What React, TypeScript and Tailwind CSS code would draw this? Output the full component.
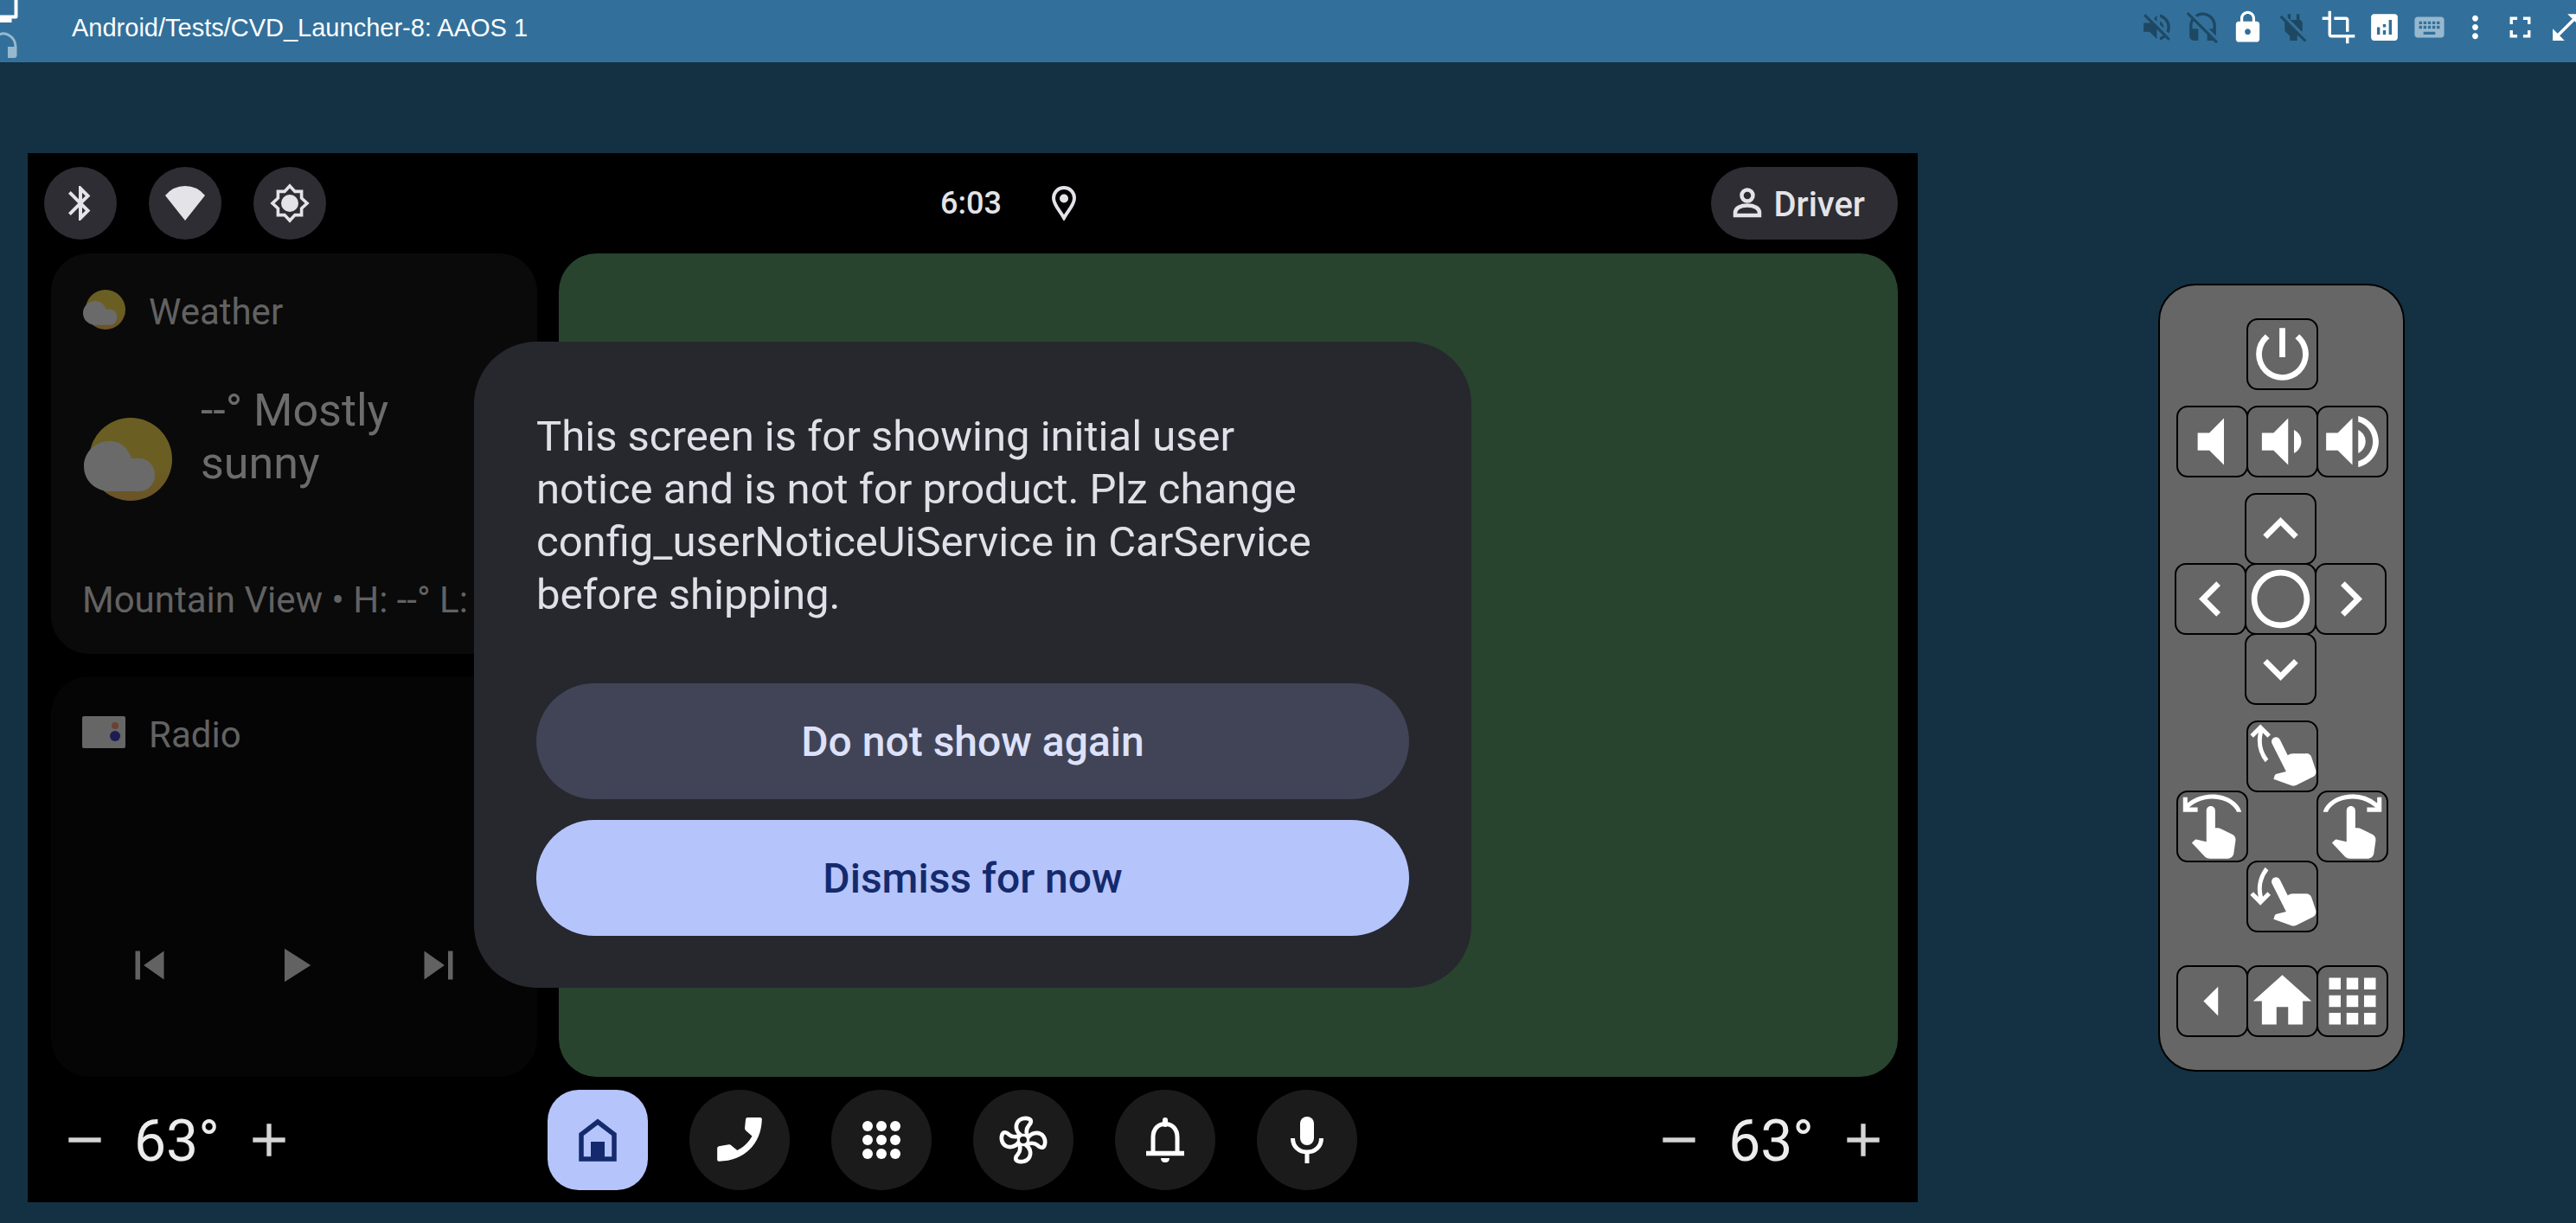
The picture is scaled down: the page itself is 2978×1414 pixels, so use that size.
import type { ReactNode } from "react";
import {
  MdAdd,
  MdAnalytics,
  MdApps,
  MdArrowLeft,
  MdBluetooth,
  MdChevronLeft,
  MdChevronRight,
  MdCrop,
  MdExpandLess,
  MdExpandMore,
  MdFullscreen,
  MdHeadsetOff,
  MdHome,
  MdKeyboard,
  MdLock,
  MdMoreVert,
  MdOpenInFull,
  MdPlayArrow,
  MdPowerOff,
  MdPowerSettingsNew,
  MdRadioButtonUnchecked,
  MdRemove,
  MdSkipNext,
  MdSkipPrevious,
  MdSwipeDown,
  MdSwipeLeft,
  MdSwipeRight,
  MdSwipeUp,
  MdVolumeDown,
  MdVolumeMute,
  MdVolumeOff,
  MdVolumeUp,
} from "react-icons/md";

/* ---------- Header ---------- */

function HeaderEdgeIcons() {
  return (
    <svg viewBox="0 0 24 72" className="h-[72px] w-6 shrink-0" fill="none" aria-hidden="true">
      <path d="M-4 19.5H18.5V-4" stroke="#fff" strokeWidth="4" strokeLinejoin="round" />
      <rect x="-2" y="20" width="15.500" height="6" fill="#fff" />
      <path d="M-2 40.500Q4 37 10 40.500Q18 45 18 54" stroke="#97b8ce" strokeWidth="3" />
      <path d="M9 54H19.500V64Q19.500 67 16.500 67H9Z" fill="#97b8ce" />
    </svg>
  );
}

const headerTools = [
  { label: "Muted", icon: <MdVolumeOff />, tone: "text-[#1e4862]" },
  { label: "Headset off", icon: <MdHeadsetOff />, tone: "text-[#1e4862]" },
  { label: "Lock", icon: <MdLock />, tone: "text-white" },
  { label: "Disconnect", icon: <MdPowerOff />, tone: "text-[#1e4862]" },
  { label: "Crop", icon: <MdCrop />, tone: "text-white" },
  { label: "Statistics", icon: <MdAnalytics />, tone: "text-white" },
  { label: "Keyboard", icon: <MdKeyboard />, tone: "text-[#97b8ce]" },
  { label: "More", icon: <MdMoreVert />, tone: "text-white" },
  { label: "Fullscreen", icon: <MdFullscreen />, tone: "text-white" },
  { label: "Expand", icon: <MdOpenInFull />, tone: "text-white" },
];

function Header() {
  return (
    <header className="flex h-[72px] shrink-0 overflow-hidden bg-[#32709b]">
      <HeaderEdgeIcons />
      <h1 className="ml-[59px] whitespace-nowrap font-['Liberation_Sans',sans-serif] text-[29px] leading-[64px] text-white">
        Android/Tests/CVD_Launcher-8: AAOS 1
      </h1>
      <div className="-mr-[9px] ml-auto flex h-[63px] w-[514px] shrink-0 items-center justify-between text-[41px]">
        {headerTools.map((t) => (
          <button key={t.label} type="button" aria-label={t.label} className={t.tone}>
            {t.icon}
          </button>
        ))}
      </div>
    </header>
  );
}

/* ---------- Car display icons ---------- */

function WifiIcon() {
  return (
    <svg viewBox="0 0 46 40" className="h-10 w-[46px]" fill="currentColor" aria-hidden="true">
      <path d="M0 11Q9 0 23 0T46 11L23 40Z" />
    </svg>
  );
}

function BrightnessIcon() {
  return (
    <svg viewBox="0 0 24 24" className="size-12" aria-hidden="true">
      <path
        d="M12 2l3 3.200h3.800V9L22 12l-3.200 3v3.800H15L12 22l-3-3.200H5.200V15L2 12l3.200-3V5.200H9Z"
        fill="none"
        stroke="currentColor"
        strokeWidth="1.800"
      />
      <circle cx="12" cy="12" r="5" fill="currentColor" />
    </svg>
  );
}

function PinIcon() {
  return (
    <svg viewBox="0 0 28 40" className="h-10 w-7" aria-hidden="true">
      <path
        d="M14 2C7 2 2 7.500 2 14c0 8 7 14 12 23 5-9 12-15 12-23C26 7.500 21 2 14 2Z"
        fill="none"
        stroke="currentColor"
        strokeWidth="4"
      />
      <circle cx="14" cy="14.500" r="5" fill="currentColor" />
    </svg>
  );
}

function PersonIcon() {
  return (
    <svg viewBox="0 0 48 48" className="size-12" fill="none" stroke="currentColor" strokeWidth="4.500" aria-hidden="true">
      <circle cx="24" cy="15" r="6.500" />
      <path d="M10 38V35C10 29.500 16 26.500 24 26.500S38 29.500 38 35V38Z" />
    </svg>
  );
}

function SunCloud({ className }: { className: string }) {
  return (
    <svg viewBox="0 0 104 98" className={className} aria-hidden="true">
      <defs>
        <linearGradient id="sun" x1="0" y1="0" x2="0" y2="1">
          <stop offset="0.600" stopColor="#6b5e22" />
          <stop offset="1" stopColor="#6b5328" />
        </linearGradient>
      </defs>
      <circle cx="56" cy="49" r="48" fill="url(#sun)" />
      <path
        d="M32 28C46 28 54 38 57 48H66C76 48 84 56 84 67S76 86 66 86H28C12 83 2 72 2 57C2 41 15 28 32 28Z"
        fill="#6a6a6a"
      />
    </svg>
  );
}

function RadioIcon() {
  return (
    <svg viewBox="0 0 50 50" className="size-[50px]" aria-hidden="true">
      <rect y="6" width="50" height="37" rx="2" fill="#666" />
      <circle cx="38" cy="17" r="4" fill="#6b4034" />
      <circle cx="38" cy="29" r="6" fill="#1c1c50" />
    </svg>
  );
}

function HouseIcon() {
  return (
    <svg viewBox="0 0 44 50" className="h-[50px] w-11" aria-hidden="true">
      <path d="M3 47V18.500L22 4L41 18.500V47Z" fill="none" stroke="currentColor" strokeWidth="5.500" />
      <path d="M14 27H30V49H14Z" fill="currentColor" />
    </svg>
  );
}

function PhoneIcon() {
  return (
    <svg viewBox="0 0 154 152" className="h-[51px] w-[52px]" fill="currentColor" aria-hidden="true">
      <path d="M104 0H148Q154 0 154 6C152 92 92 150 6 151Q0 151 0 145V106Q0 100 6 99L40 93Q45 92 48 96L69 113C90 103 108 86 120 64L98 45Q94 41 95 36L98 6Q99 0 104 0Z" />
    </svg>
  );
}

function DotsIcon() {
  return (
    <svg viewBox="0 0 44 44" className="size-11" fill="currentColor" aria-hidden="true">
      {[6, 22, 38].map((y) => [6, 22, 38].map((x) => <circle key={`${x}-${y}`} cx={x} cy={y} r="6" />))}
    </svg>
  );
}

function FanIcon() {
  return (
    <svg viewBox="-84 -84 168 168" className="size-14" fill="none" stroke="currentColor" strokeLinecap="round" aria-hidden="true">
      {[0, 90, 180, 270].map((a) => (
        <path
          key={a}
          transform={`rotate(${a})`}
          d="M-10 -18C-24 -28 -28 -46 -21 -60C-13 -76 8 -78 20 -73C30 -68 27 -58 19 -50C11 -41 9 -32 13 -18"
          strokeWidth="14"
        />
      ))}
      <circle r="17" strokeWidth="10" />
    </svg>
  );
}

function BellIcon() {
  return (
    <svg viewBox="0 0 44 54" className="h-[54px] w-11" fill="none" stroke="currentColor" aria-hidden="true">
      <path d="M8 41V24C8 14 14 8.500 22 8.500S36 14 36 24V41" strokeWidth="5" />
      <path d="M0 42.500H44" strokeWidth="5.500" />
      <path d="M22 9V4" strokeWidth="6" strokeLinecap="round" />
      <path d="M17 48H27Q27 53 22 53T17 48Z" fill="currentColor" stroke="none" />
    </svg>
  );
}

function MicIcon() {
  return (
    <svg viewBox="0 0 38 54" className="h-[54px] w-[38px]" aria-hidden="true">
      <rect x="11" width="16" height="33" rx="8" fill="currentColor" />
      <path d="M2.500 25C2.500 35 10 41 19 41S35.500 35 35.500 25M19 41V54" fill="none" stroke="currentColor" strokeWidth="5" />
    </svg>
  );
}

/* ---------- Car display ---------- */

function StatusButton({ label, children }: { label: string; children: ReactNode }) {
  return (
    <button type="button" aria-label={label} className="flex size-[84px] items-center justify-center rounded-full bg-[#2d2d33]">
      {children}
    </button>
  );
}

function StatusBar() {
  return (
    <div className="grid h-[116px] shrink-0 grid-cols-[1fr_auto_1fr] items-center pl-[19px] pr-[23px] text-[#e3e3e8]">
      <div className="flex gap-[37px]">
        <StatusButton label="Bluetooth">
          <MdBluetooth className="text-[48px]" />
        </StatusButton>
        <StatusButton label="Wi-Fi">
          <WifiIcon />
        </StatusButton>
        <StatusButton label="Brightness">
          <BrightnessIcon />
        </StatusButton>
      </div>
      <time className="text-[36px] font-medium leading-[48px]">6:03</time>
      <div className="flex items-center justify-between pl-[58px]">
        <PinIcon />
        <button type="button" className="flex h-[84px] items-center gap-1.5 rounded-full bg-[#2d2d33] pl-[18px] pr-[38px] text-[40px] font-medium">
          <PersonIcon />
          <span className="pt-1">Driver</span>
        </button>
      </div>
    </div>
  );
}

function WeatherCard() {
  return (
    <section className="flex min-w-0 flex-col overflow-hidden rounded-[44px] bg-[#0a0a0a] px-9 pb-[34px] pt-[40px] text-[#626262]">
      <div className="flex items-start gap-[27px]">
        <SunCloud className="h-[50px] w-[50px]" />
        <h2 className="text-[42px] leading-[56px]">Weather</h2>
      </div>
      <div className="mt-[55px] flex items-start gap-[33px]">
        <SunCloud className="mt-[38px] h-[98px] w-[104px] shrink-0" />
        <p className="w-[260px] text-[52px] leading-[61px] text-[#6c6c6c]">--° Mostly sunny</p>
      </div>
      <p className="mt-auto whitespace-nowrap text-[42px] leading-[56px]">Mountain View • H: --° L: --°</p>
    </section>
  );
}

function RadioCard() {
  return (
    <section className="flex min-w-0 flex-col overflow-hidden rounded-[44px] bg-[#050505] px-9 pb-[96px] pt-[40px] text-[#626262]">
      <div className="flex items-start gap-[27px]">
        <RadioIcon />
        <h2 className="text-[42px] leading-[56px]">Radio</h2>
      </div>
      <div className="mt-auto flex justify-between px-[45px] text-[66px]">
        <button type="button" aria-label="Previous">
          <MdSkipPrevious />
        </button>
        <button type="button" aria-label="Play">
          <MdPlayArrow />
        </button>
        <button type="button" aria-label="Next">
          <MdSkipNext />
        </button>
      </div>
    </section>
  );
}

function Temperature() {
  return (
    <div className="flex items-center gap-[25px] text-[64px] text-[#d4d4d4]">
      <button type="button" aria-label="Cooler">
        <MdRemove />
      </button>
      <span className="pt-1 text-[66px] leading-[80px] text-[#ececec]">63°</span>
      <button type="button" aria-label="Warmer">
        <MdAdd />
      </button>
    </div>
  );
}

const dock = [
  { label: "Phone", icon: <PhoneIcon /> },
  { label: "Apps", icon: <DotsIcon /> },
  { label: "Climate", icon: <FanIcon /> },
  { label: "Notifications", icon: <BellIcon /> },
  { label: "Assistant", icon: <MicIcon /> },
];

function Dock() {
  return (
    <div className="flex h-[145px] shrink-0 items-center pl-[34px] pr-[31px]">
      <div className="w-[567px]">
        <Temperature />
      </div>
      <nav className="flex gap-12">
        <button type="button" aria-label="Home" className="flex size-[116px] items-center justify-center rounded-[36px] bg-[#b5c4fb] text-[#152a6c]">
          <HouseIcon />
        </button>
        {dock.map((d) => (
          <button key={d.label} type="button" aria-label={d.label} className="flex size-[116px] items-center justify-center rounded-full bg-[#1b1b1b] text-white">
            {d.icon}
          </button>
        ))}
      </nav>
      <div className="ml-auto">
        <Temperature />
      </div>
    </div>
  );
}

function NoticeDialog() {
  return (
    <div className="absolute inset-0 flex items-start justify-center pt-[218px]">
      <div role="dialog" aria-label="User notice" className="flex w-[1153px] flex-col rounded-[72px] bg-[#26282e] px-[72px] pb-[60px] pt-[79px]">
        <p className="max-w-[910px] text-[49px] leading-[61px] text-[#e0e1e8]">
          This screen is for showing initial user notice and is not for product. Plz change config_userNoticeUiService in CarService before shipping.
        </p>
        <div className="mt-[72px] flex flex-col gap-6 text-[48px] font-medium">
          <button type="button" className="h-[134px] rounded-full bg-[#414457] pt-0.5 text-[#dde1f9]">
            Do not show again
          </button>
          <button type="button" className="h-[134px] rounded-full bg-[#b5c4fb] pt-0.5 text-[#152a6c]">
            Dismiss for now
          </button>
        </div>
      </div>
    </div>
  );
}

function CarDisplay() {
  return (
    <div className="relative flex flex-1 flex-col bg-black font-['Roboto',sans-serif]">
      <StatusBar />
      <div className="flex flex-1 gap-[25px] pl-[27px] pr-[23px]">
        <div className="grid w-[562px] shrink-0 grid-rows-[1fr_1fr] gap-[26px]">
          <WeatherCard />
          <RadioCard />
        </div>
        <div className="flex-1 rounded-[44px] bg-[#28442e]" />
      </div>
      <Dock />
      <NoticeDialog />
    </div>
  );
}

/* ---------- Remote ---------- */

function Key({ label, className = "", children }: { label: string; className?: string; children: ReactNode }) {
  return (
    <button
      type="button"
      aria-label={label}
      className={`flex size-[83px] items-center justify-center rounded-[13px] border-2 border-black *:shrink-0 ${className}`}
    >
      {children}
    </button>
  );
}

function Remote() {
  return (
    <aside className="flex w-[285px] shrink-0 flex-col gap-5 self-start rounded-[43px] border-2 border-black bg-[#666] pb-[40px] pl-[19px] pt-[38px] text-[81px] text-white">
      <div className="grid auto-rows-[81px] grid-cols-[81px_81px_81px]">
        <Key label="Power" className="col-start-2">
          <MdPowerSettingsNew />
        </Key>
      </div>
      <div className="grid auto-rows-[81px] grid-cols-[81px_81px_81px]">
        <Key label="Mute">
          <MdVolumeMute />
        </Key>
        <Key label="Volume down">
          <MdVolumeDown />
        </Key>
        <Key label="Volume up">
          <MdVolumeUp />
        </Key>
      </div>
      <div className="-ml-0.5 grid auto-rows-[81px] grid-cols-[81px_81px_81px]">
        <Key label="Up" className="col-start-2">
          <MdExpandLess />
        </Key>
        <Key label="Left" className="col-start-1">
          <MdChevronLeft />
        </Key>
        <Key label="Select">
          <MdRadioButtonUnchecked />
        </Key>
        <Key label="Right">
          <MdChevronRight />
        </Key>
        <Key label="Down" className="col-start-2">
          <MdExpandMore />
        </Key>
      </div>
      <div className="grid auto-rows-[81px] grid-cols-[81px_81px_81px]">
        <Key label="Swipe up" className="col-start-2">
          <MdSwipeUp />
        </Key>
        <Key label="Swipe left" className="col-start-1">
          <MdSwipeLeft />
        </Key>
        <Key label="Swipe right" className="col-start-3">
          <MdSwipeRight />
        </Key>
        <Key label="Swipe down" className="col-start-2">
          <MdSwipeDown />
        </Key>
      </div>
      <div className="mt-5 grid auto-rows-[81px] grid-cols-[81px_81px_81px]">
        <Key label="Back">
          <MdArrowLeft />
        </Key>
        <Key label="Home">
          <MdHome />
        </Key>
        <Key label="Apps">
          <MdApps />
        </Key>
      </div>
    </aside>
  );
}

export default function App() {
  return (
    <div className="flex min-h-screen flex-col overflow-hidden bg-[#133142]">
      <Header />
      <main className="flex flex-1 pb-6 pl-8 pt-[105px]">
        <CarDisplay />
        <div className="flex pl-[278px] pr-[198px] pt-[151px]">
          <Remote />
        </div>
      </main>
    </div>
  );
}
